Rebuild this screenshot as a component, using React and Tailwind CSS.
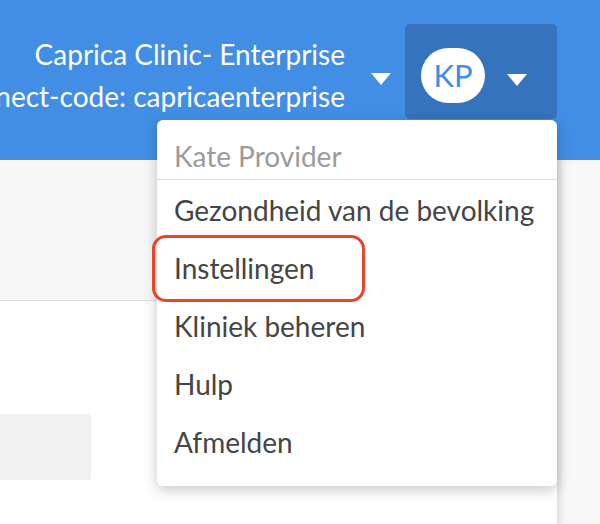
import React from "react";

const Caret = ({ className }) => (
  <svg className={className} width="20" height="12" viewBox="0 0 20 12">
    <path d="M0 0 H20 L10 12 Z" fill="#ffffff" />
  </svg>
);

const menuItems = [
  "Gezondheid van de bevolking",
  "Instellingen",
  "Kliniek beheren",
  "Hulp",
  "Afmelden",
];

const App = () => {
  return (
    <div
      className="relative w-[600px] h-[524px] overflow-hidden bg-white"
      style={{ fontFamily: "Lato, 'Open Sans', sans-serif" }}
    >
      {/* top bar */}
      <header className="h-[160px] bg-[#418ee4] flex justify-end items-start pr-[43px] pt-[24px]">
        <div className="flex items-start shrink-0">
          <div className="mt-[9px] text-right text-white text-[28px] leading-[42px] whitespace-nowrap">
            <div>Caprica Clinic- Enterprise</div>
            <div>connect-code: capricaenterprise</div>
          </div>
          <Caret className="ml-[26px] mt-[49px]" />
          <button className="ml-[14px] w-[152px] h-[95px] rounded-[5px] bg-[#3573bd] flex items-start pl-[16px] pt-[24px]">
            <div className="w-[64px] h-[55px] rounded-full bg-white flex items-center justify-center text-[31px] text-[#418ee4]">
              KP
            </div>
            <Caret className="ml-[22px] mt-[26px]" />
          </button>
        </div>
      </header>

      {/* page body */}
      <div className="flex h-[364px]">
        <main className="flex-1">
          <div className="h-[141px] bg-[#f7f7f7] border-b border-[#dcdcdc]" />
          <div className="mt-[113px] w-[91px] h-[66px] bg-[#f1f1f1] rounded-r-[2px]" />
        </main>
        <aside className="w-[43px] bg-[#f8f8f8] shadow-[inset_7px_0_8px_-5px_rgba(0,0,0,0.14)]" />
      </div>

      {/* user menu */}
      <div className="absolute left-[157px] top-[120px] w-[400px] h-[366px] bg-white rounded-[6px] shadow-[0_4px_14px_rgba(0,0,0,0.22)]">
        <div className="px-[17px] pt-[22px] pb-[9px] text-[28px] leading-[28px] text-[#9b9b9b]">
          Kate Provider
        </div>
        <div className="border-t border-[#dddddd]" />
        <ul className="pt-[1px]">
          {menuItems.map((item) => (
            <li
              key={item}
              className="relative h-[58px] px-[17px] text-[28px] leading-[58px] text-[#454545] whitespace-nowrap"
            >
              {item}
              {item === "Instellingen" && (
                <span className="absolute left-[-5px] top-[-4px] w-[213px] h-[67px] rounded-[14px] border-[3px] border-[#e8432b]" />
              )}
            </li>
          ))}
        </ul>
      </div>
    </div>
  );
};

export default App;
